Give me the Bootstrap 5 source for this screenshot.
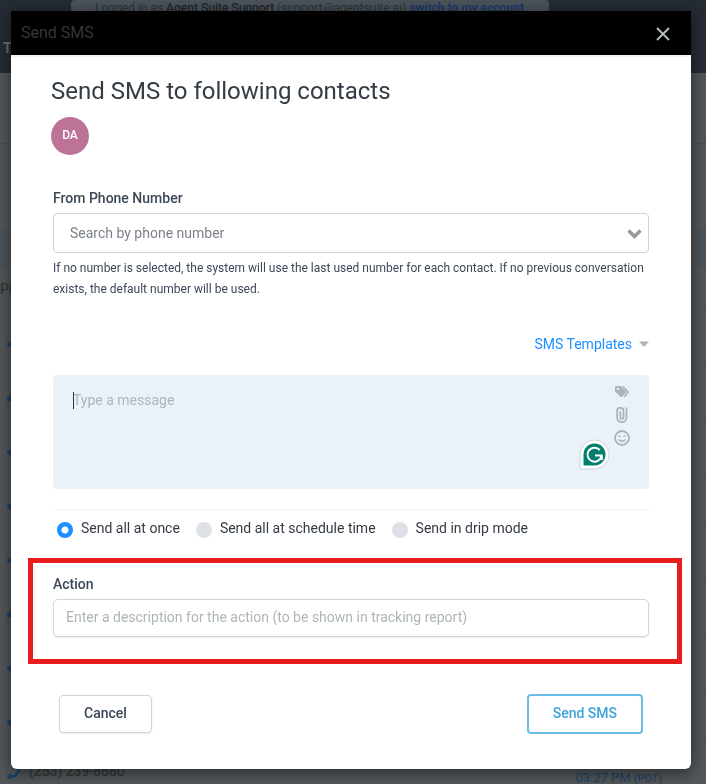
<!DOCTYPE html>
<html lang="en">
<head>
<meta charset="utf-8">
<meta name="viewport" content="width=device-width, initial-scale=1">
<title>Send SMS</title>
<link href="https://cdn.jsdelivr.net/npm/bootstrap@5.3.0/dist/css/bootstrap.min.css" rel="stylesheet">
<style>
  body { font-family: Roboto, sans-serif; font-size: 14px; line-height: 20px; color: #333b44; background: #525759; overflow: hidden; }

  /* dimmed page behind the dialog */
  .backpage { height: 100vh; overflow: hidden; color: #2e3335; }
  .topbar { height: 73px; background: #262c35; }
  .notice { width: 478px; margin-left: 71px; height: 24px; padding-left: 24px; border-radius: 4px; background: #4c535a; color: #2e3437; font-size: 12px; line-height: 16px; white-space: nowrap; }
  .notice strong { color: #202529; font-weight: 500; }
  .notice a { color: #1d3a69; font-weight: 700; }
  .tabname { padding: 14px 0 0 3px; color: #6b7075; font-size: 14px; font-weight: 700; }
  .strip { border-bottom: 1px solid #494f51; height: 71px; }
  .toolstrip { height: 86px; }
  .bandrow { height: 37px; background: #4c545b; }
  .colhead { height: 45px; font-size: 14px; line-height: 44px; border-bottom: 1px solid #4d5254; }
  .callrow { height: 54px; padding: 0 44px 0 7px; border-bottom: 1px solid #4d5254; }
  .callrow svg { color: #1d4166; margin-top: 3px; }
  .calltime { color: #1d4166; padding-top: 16px; font-size: 13px; }
  .calltime small { font-size: 11px; }

  /* dialog */
  .sms-dialog { max-width: none; margin: 11px 15px 15px 11px; }
  .sms-dialog .modal-content { border: 0; border-radius: 0 0 6px 6px; color: #333b44; box-shadow: 0 3px 16px rgba(0,0,0,.55); }
  .sms-dialog .modal-header { height: 46px; padding: 0 20px 0 10px; background: #000; border-radius: 0; border-bottom: 2px solid #eef5fa; }
  .sms-dialog .modal-title { font-size: 16px; line-height: 24px; font-weight: 400; color: #30373a; }
  .closer { width: 16px; height: 16px; margin-top: 2px; line-height: 1; color: #b9c0c5; }
  .sms-dialog .modal-body { padding: 18px 42px 35px; }
  .lead-title { font-size: 24px; line-height: 32px; font-weight: 400; margin: 0 0 10px -2px; }
  .avatar { width: 38px; height: 38px; margin: 0 0 33px -2px; padding-bottom: 2px; background: #bc7396; color: #fff; font-size: 12px; font-weight: 500; }
  .fieldname { font-size: 14px; line-height: 20px; font-weight: 500; color: #3c4858; margin-bottom: 5px; }
  .phone-select { height: 40px; padding: 0 40px 0 16px; border-color: #cfd3dd; border-radius: 4px; color: #7b818c; font-size: 14px; background-size: 15px 12px; background-position: right 6px center;
    background-image: url("data:image/svg+xml,%3Csvg xmlns='http://www.w3.org/2000/svg' viewBox='0 0 15 12'%3E%3Cpath d='M1.500 3.500 7.500 9.500 13.500 3.500' fill='none' stroke='%23999' stroke-width='3.400'/%3E%3C/svg%3E"); }
  .hint { font-size: 12px; line-height: 21px; color: #3c4858; margin: 5px 0 34px; }
  .templates { color: #1e90ff; gap: 7px; font-size: 14px; line-height: 20px; }
  .compose { margin-top: 21px; height: 114px; background: #eaf1f8; border-radius: 4px; }
  .compose textarea { height: 114px; resize: none; padding: 15px 80px 12px 20px; border: 0; background: transparent; font-size: 14px; line-height: 20px; }
  .compose textarea::placeholder, .action-input::placeholder { color: #adb5b9; opacity: 1; }
  .caret-bar { left: 20px; top: 17px; width: 1px; height: 17px; background: #333; }
  .toolcol { top: 9px; right: 19px; gap: 7px; color: #adb3b7; }
  .toolcol button { width: 16px; height: 16px; color: inherit; }
  .helper { right: 39px; top: 64px; width: 31px; height: 31px; }
  .sendmode { margin-top: 20px; padding: 8px 0 0 4px; border-top: 1px solid #f1f2f4; column-gap: 16px; }
  .sendmode .form-check { min-height: 20px; padding: 0; margin: 0; gap: 8px; }
  .sendmode .form-check-input { width: 16px; height: 16px; margin: 4px 0 0; float: none; border: 0; background-color: #dee1e6; }
  .sendmode .form-check-input:checked { background-color: #1e8fff; background-image: radial-gradient(circle, #fff 0 3px, transparent 4px); }
  .callout { margin: 20px -33px 30px -25px; padding: 11px 28px 22px 20px; border: 5px solid #e81c1c; }
  .action-input { height: 38px; padding: 0 12px 2px; font-size: 14px; border-color: #cfd5de; border-radius: 5px; box-shadow: 0 1px 2px rgba(60,70,90,.08); }
  .footer-row { padding: 0 6px; }
  .btn-plain, .btn-send { font-size: 14px; line-height: 20px; font-weight: 500; border-radius: 4px; }
  .btn-plain { padding: 7px 24px 9px; border: 1px solid #cfd3dd; color: #3c4858; box-shadow: 0 1px 2px rgba(60,70,90,.1); }
  .btn-send { padding: 7px 24px 9px; border: 2px solid #6cbbe8; color: #3ea2dc; }
</style>
</head>
<body>
<svg class="d-none" aria-hidden="true">
  <symbol id="handset" viewBox="0 0 16 16"><path fill="currentColor" d="M15.500.8 12.300 0a.8.8 0 0 0-.9.400L9.900 3.900a.8.8 0 0 0 .2.900L12 6.300A11.500 11.500 0 0 1 6.300 12L4.800 10.100a.8.8 0 0 0-.9-.2L.4 11.400a.8.8 0 0 0-.4.900l.8 3.200c.1.300.4.500.7.500A14.500 14.500 0 0 0 16 1.500c0-.3-.2-.6-.5-.7z"/></symbol>
</svg>

<div class="backpage" aria-hidden="true">
  <div class="topbar">
    <div class="notice">Logged in as <strong>Agent Suite Support</strong> (support@agentsuite.ai) <a href="#">switch to my account</a></div>
    <div class="tabname">Tasks</div>
  </div>
  <div class="strip"></div>
  <div class="toolstrip"></div>
  <div class="bandrow"></div>
  <div class="colhead">Phone</div>
  <div class="callrow d-flex align-items-center"><svg width="14" height="14"><use href="#handset"/></svg></div>
  <div class="callrow d-flex align-items-center"><svg width="14" height="14"><use href="#handset"/></svg></div>
  <div class="callrow d-flex align-items-center"><svg width="14" height="14"><use href="#handset"/></svg></div>
  <div class="callrow d-flex align-items-center"><svg width="14" height="14"><use href="#handset"/></svg></div>
  <div class="callrow d-flex align-items-center"><svg width="14" height="14"><use href="#handset"/></svg></div>
  <div class="callrow d-flex align-items-center"><svg width="14" height="14"><use href="#handset"/></svg></div>
  <div class="callrow d-flex align-items-center"><svg width="14" height="14"><use href="#handset"/></svg></div>
  <div class="callrow d-flex align-items-center"><svg width="14" height="14"><use href="#handset"/></svg></div>
  <div class="callrow d-flex align-items-center">
    <svg width="14" height="14"><use href="#handset"/></svg>
    <span class="ms-2">(253) 239-8680</span>
    <span class="calltime ms-auto">03:27 PM <small>(PDT)</small></span>
  </div>
</div>

<div class="modal d-block" role="dialog" aria-labelledby="dialogTitle">
  <div class="modal-dialog sms-dialog">
    <div class="modal-content">
      <div class="modal-header d-flex align-items-center justify-content-between">
        <h1 class="modal-title" id="dialogTitle">Send SMS</h1>
        <button type="button" class="btn p-0 border-0 closer" aria-label="Close">
          <svg class="d-block" width="16" height="16" viewBox="0 0 16 16"><path d="M2 2 14 14M14 2 2 14" stroke="currentColor" stroke-width="1.8"/></svg>
        </button>
      </div>
      <form class="modal-body">
        <h2 class="lead-title">Send SMS to following contacts</h2>
        <div class="avatar rounded-circle d-flex align-items-center justify-content-center">DA</div>

        <div>
          <label class="fieldname d-block" for="fromPhone">From Phone Number</label>
          <select class="form-select phone-select" id="fromPhone"><option>Search by phone number</option></select>
          <p class="hint">If no number is selected, the system will use the last used number for each contact. If no previous conversation exists, the default number will be used.</p>
        </div>

        <div class="d-flex justify-content-end">
          <button type="button" class="btn p-0 border-0 d-flex align-items-center templates">SMS Templates
            <svg width="10" height="6" viewBox="0 0 10 6"><path d="M0 .5h10L5.800 5.200q-.8.800-1.600 0z" fill="#adb5bb"/></svg>
          </button>
        </div>

        <div class="compose position-relative">
          <textarea class="form-control shadow-none" placeholder="Type a message" aria-label="Message"></textarea>
          <span class="caret-bar position-absolute"></span>
          <div class="toolcol position-absolute d-flex flex-column">
            <button type="button" class="btn p-0 border-0" aria-label="Insert tag">
              <svg class="d-block" width="16" height="14" viewBox="0 0 16 14"><path fill="currentColor" fill-rule="evenodd" d="M2.200 1H6.500l5.500 5.300q.7.700 0 1.400L8 11.800q-.7.600-1.400 0L1 6.400V2.200Q1 1 2.200 1zM4 2.700a1.200 1.200 0 1 0 0 2.400 1.200 1.200 0 0 0 0-2.400z"/><path d="M8.500 1.300 14 6.600q.5.500 0 1L10 12" fill="none" stroke="currentColor" stroke-width="1.500"/></svg>
            </button>
            <button type="button" class="btn p-0 border-0" aria-label="Attach file">
              <svg class="d-block" width="16" height="16" viewBox="0 0 16 16"><path d="M12.500.5V10.500a4.700 4.700 0 0 1-9.400 0V4a3 3 0 0 1 6.400 0V10.300a1.600 1.600 0 0 1-3.200 0V4.200" fill="none" stroke="currentColor" stroke-width="1.800"/></svg>
            </button>
            <button type="button" class="btn p-0 border-0" aria-label="Insert emoji">
              <svg class="d-block" width="16" height="16" viewBox="0 0 16 16"><circle cx="8" cy="8" r="7" fill="none" stroke="currentColor" stroke-width="1.800"/><path d="M4.800 9.300a3.500 3 0 0 0 6.400 0" fill="none" stroke="currentColor" stroke-width="1.600"/><path d="M4.500 5.500h2v1.600h-2zM9.500 5.500h2v1.600h-2z" fill="currentColor"/></svg>
            </button>
          </div>
          <button type="button" class="btn p-0 border-0 helper position-absolute" aria-label="Grammar assistant">
            <svg class="d-block" width="31" height="31" viewBox="0 0 31 31"><path d="M1 30V15.500A14.500 14.500 0 1 1 15.500 30z" fill="#fff" stroke="#cfd3dc"/><path d="M4.500 26.500V15.500A11 11 0 1 1 15.500 26.500z" fill="#03806d"/><path d="M20.800 11A7 7 0 1 0 22.500 16.500M16 16.600H22.800V21" fill="none" stroke="#fff" stroke-width="2"/></svg>
          </button>
        </div>

        <div class="sendmode d-flex flex-wrap">
          <div class="form-check d-flex"><input class="form-check-input" type="radio" name="mode" id="modeOnce" checked><label class="form-check-label" for="modeOnce">Send all at once</label></div>
          <div class="form-check d-flex"><input class="form-check-input" type="radio" name="mode" id="modeSchedule"><label class="form-check-label" for="modeSchedule">Send all at schedule time</label></div>
          <div class="form-check d-flex"><input class="form-check-input" type="radio" name="mode" id="modeDrip"><label class="form-check-label" for="modeDrip">Send in drip mode</label></div>
        </div>

        <div class="callout">
          <label class="fieldname d-block" for="actionText">Action</label>
          <input type="text" class="form-control action-input" id="actionText" placeholder="Enter a description for the action (to be shown in tracking report)">
        </div>

        <div class="footer-row d-flex justify-content-between align-items-center">
          <button type="button" class="btn btn-plain">Cancel</button>
          <button type="submit" class="btn btn-send">Send SMS</button>
        </div>
      </form>
    </div>
  </div>
</div>
<script src="https://cdn.jsdelivr.net/npm/bootstrap@5.3.0/dist/js/bootstrap.bundle.min.js"></script>
</body>
</html>
